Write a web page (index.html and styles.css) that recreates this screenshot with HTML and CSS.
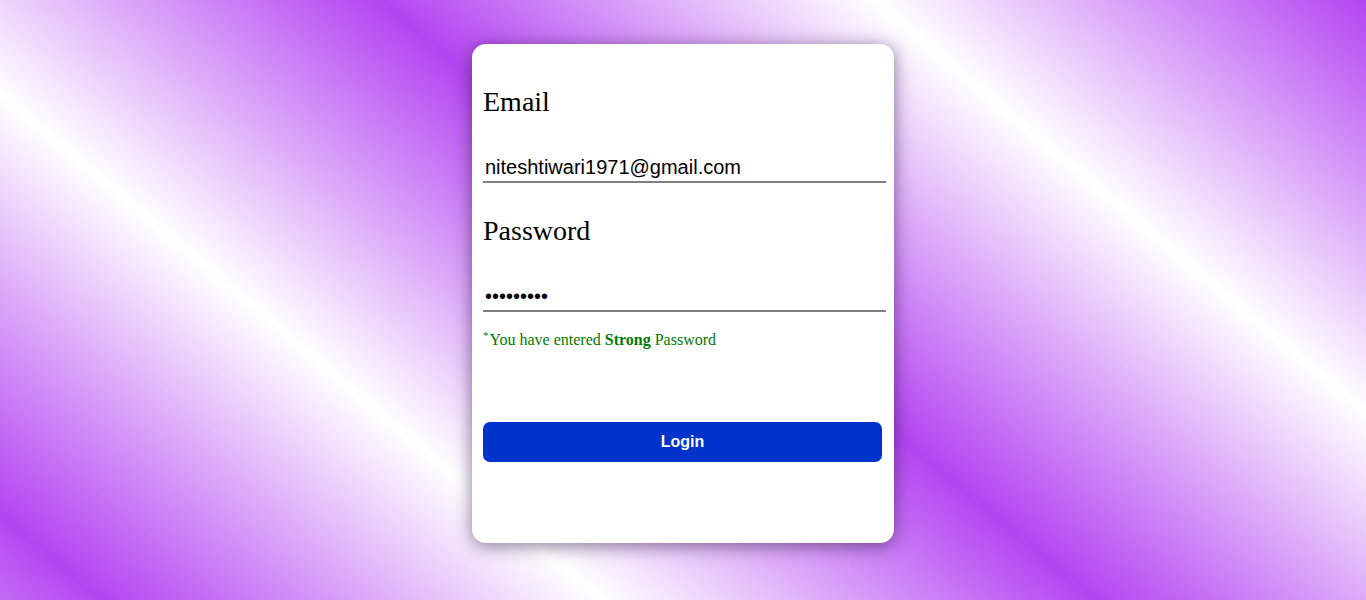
FILE: index.html
```html
<!DOCTYPE html>
<html lang="en">
<head>
<meta charset="utf-8">
<title>Login</title>
<link rel="stylesheet" href="styles.css">
</head>
<body>
<main class="page">
  <form class="card">
    <label class="field-label" for="email">Email</label>
    <input class="field-input" id="email" type="email" value="niteshtiwari1971@gmail.com">
    <label class="field-label field-label--second" for="password">Password</label>
    <input class="field-input" id="password" type="password" value="123456789">
    <p class="hint"><sup class="hint-star">*</sup>You have entered <strong>Strong</strong> Password</p>
    <button class="login-btn" type="button">Login</button>
  </form>
</main>
</body>
</html>
```

FILE: styles.css
```css
html, body {
  margin: 0;
  padding: 0;
}

.page {
  box-sizing: border-box;
  width: 100%;
  height: 100vh;
  padding-top: 44px;
  display: flex;
  justify-content: center;
  align-items: flex-start;
  background: linear-gradient(40deg,
    #ffffff -251px,
    #b445f2 66px,
    #ffffff 387px,
    #b445f2 704px,
    #ffffff 1021px,
    #b445f2 1338px);
}

.card {
  box-sizing: border-box;
  width: 422px;
  height: 499px;
  padding: 42px 0 0 11px;
  background: #ffffff;
  border-radius: 14px;
  box-shadow: 0 3px 18px rgba(40, 20, 60, 0.55);
  display: flex;
  flex-direction: column;
  align-items: flex-start;
}

.field-label {
  display: block;
  font-family: "Liberation Serif", "Times New Roman", serif;
  font-size: 28px;
  line-height: 32px;
  color: #000;
}

.field-label--second {
  margin-top: 32px;
}

.field-input {
  box-sizing: border-box;
  display: block;
  width: 403px;
  height: 30px;
  margin: 35px 0 0;
  padding: 3px 2px 2px;
  border: none;
  border-bottom: 2px solid #808080;
  outline: none;
  background: transparent;
  font-family: "Liberation Sans", Arial, sans-serif;
  font-size: 20px;
  line-height: 23px;
  color: #000;
}

.hint {
  margin: 19px 0 0;
  font-family: "Liberation Serif", "Times New Roman", serif;
  font-size: 16px;
  line-height: 18px;
  color: #007a00;
}

.hint-star {
  font-size: 11px;
  vertical-align: 6px;
  line-height: 0;
  margin-right: 1px;
}

.login-btn {
  width: 399px;
  height: 40px;
  margin-top: 73px;
  border: none;
  border-radius: 7px;
  background: #0033cc;
  color: #ffffff;
  font-family: "Liberation Sans", Arial, sans-serif;
  font-size: 16px;
  font-weight: bold;
  cursor: pointer;
}
```
